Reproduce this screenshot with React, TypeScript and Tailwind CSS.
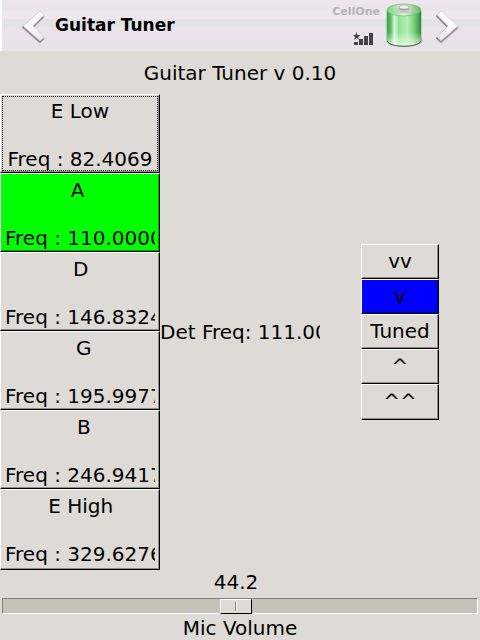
import { useState } from "react";

const strings = [
  { name: "E Low", freq: "82.4069" },
  { name: "A  ", freq: "110.0000" },
  { name: "D ", freq: "146.8324" },
  { name: "G", freq: "195.9977" },
  { name: "B", freq: "246.9417" },
  { name: "E High ", freq: "329.6276" },
];

const steps = ["vv", "v", "Tuned", "^", "^^"];

const maxVolume = 90;

const bevel =
  "border border-t-white border-l-white border-r-black border-b-black shadow-[inset_-1px_-1px_rgb(0_0_0/0.35)]";

function Chevron({ d, id }: { d: string; id: string }) {
  return (
    <svg width="24" height="38" viewBox="0 0 24 38" fill="none" aria-hidden="true">
      <defs>
        <linearGradient id={id} x1="0" y1="0" x2="0" y2="1">
          <stop offset="0" stopColor="#ffffff" />
          <stop offset="0.6" stopColor="#f8f6f8" />
          <stop offset="1" stopColor="#e6e3e7" />
        </linearGradient>
      </defs>
      <path d={d} fill="#c9c4ca" stroke="#d3ced4" strokeWidth="2" transform="translate(0 2)" />
      <path d={d} fill="#6d6a70" transform="translate(-1 1)" />
      <path d={d} fill="#8f8b92" transform="translate(0 2)" />
      <path d={d} fill={`url(#${id})`} stroke="#c4c0c6" strokeWidth="0.5" />
    </svg>
  );
}

function Battery() {
  return (
    <svg width="38" height="46" viewBox="0 0 38 46" aria-hidden="true">
      <defs>
        <linearGradient id="cell">
          <stop offset="0" stopColor="#3fae4c" />
          <stop offset="0.1" stopColor="#52b95a" />
          <stop offset="0.22" stopColor="#d9f8d8" />
          <stop offset="0.34" stopColor="#8fe391" />
          <stop offset="0.6" stopColor="#b4efb3" />
          <stop offset="0.8" stopColor="#77cf79" />
          <stop offset="1" stopColor="#2f8a3a" />
        </linearGradient>
        <linearGradient id="foot" x1="0" y1="0" x2="0" y2="1">
          <stop offset="0.6" stopColor="#ffffff" stopOpacity="0" />
          <stop offset="1" stopColor="#f0fbee" stopOpacity="0.8" />
        </linearGradient>
        <linearGradient id="lid">
          <stop offset="0" stopColor="#7fce82" />
          <stop offset="0.5" stopColor="#dff5dc" />
          <stop offset="1" stopColor="#5fb564" />
        </linearGradient>
      </defs>
      <ellipse cx="20" cy="38" rx="17" ry="5" fill="#c9c3ca" />
      <path d="M1 8V38C4 45 32 45 35 38V8Z" fill="url(#cell)" stroke="#3c8c45" strokeWidth="0.6" />
      <path d="M1 8V38C4 45 32 45 35 38V8Z" fill="url(#foot)" />
      <path d="M1 38C4 45 32 45 35 38" fill="none" stroke="#47604a" strokeWidth="1" />
      <ellipse cx="18" cy="7" rx="17" ry="6" fill="url(#lid)" stroke="#69b56d" strokeWidth="0.7" />
      <ellipse cx="18" cy="7" rx="8" ry="3.500" fill="#c3cbc3" />
      <path d="M13 4V6C14 8 22 8 23 6V4Z" fill="#a8a8aa" />
      <ellipse cx="18" cy="4" rx="5" ry="2" fill="#eeeeef" stroke="#9b9b9d" strokeWidth="0.5" />
    </svg>
  );
}

function Signal() {
  return (
    <svg width="21" height="14" viewBox="0 0 21 14" fill="#454347" aria-hidden="true">
      <path d="M3.500 0L4.500 3H7.500L5 5L6 8L3.500 6L1 8L2 5L0 3H2.500Z" />
      <path d="M1 10H5V13H1ZM6 7H10V13H6ZM11 4H15V13H11ZM16 1H20V13H16Z" />
    </svg>
  );
}

export default function App() {
  const [selected, setSelected] = useState(1);
  const [volume, setVolume] = useState(44.2);

  return (
    <main className="min-h-screen bg-[#dedbd6] font-['DejaVu_Sans',sans-serif] text-xl leading-6 text-black">
      <header className="flex h-[51px] items-center border-l-2 border-white bg-[linear-gradient(#eee6ee_0_4px,#ebe5eb_4px_11px,#ede8ed_11px_19px,#e3e2e4_19px_27px,#e9e4ea_27px_31px,#ebe3eb_31px_43px,#e6e3e7_43px)] px-5">
        <button type="button" aria-label="Back">
          <Chevron id="back" d="M18 4L22 8L11 19L22 30L18 34L1 19Z" />
        </button>
        <h1 className="ml-[9px] grow pb-0.5 text-[17px] font-bold">Guitar Tuner</h1>
        <div className="flex flex-col items-end gap-3 pr-1.5 pb-px">
          <span className="text-[11px] leading-4 font-bold text-[#b5b1b6]">CellOne</span>
          <div className="pr-1.5">
            <Signal />
          </div>
        </div>
        <Battery />
        <button type="button" aria-label="Next" className="ml-3">
          <Chevron id="next" d="M5 4L1 8L12 19L1 30L5 34L22 19Z" />
        </button>
      </header>

      <h2 className="pt-2.5 pb-[9px] text-center">Guitar Tuner v 0.10</h2>

      <div className="grid grid-cols-3 items-center">
        <div className="flex flex-col">
          {strings.map((s, i) => (
            <button
              key={s.freq}
              type="button"
              onClick={() => setSelected(i)}
              className={`${bevel} h-[79px] p-px last:h-[81px] ${
                i === selected ? "bg-[#00ff00]" : ""
              }`}
            >
              <span
                className={`block h-full border px-0.5 pt-0.5 ${
                  i === 0 ? "border-dotted border-black" : "border-transparent"
                }`}
              >
                <span className="flex justify-center-safe overflow-hidden">
                  <span className="block text-center whitespace-pre">
                    {`${s.name}\n\nFreq : ${s.freq}`}
                  </span>
                </span>
              </span>
            </button>
          ))}
        </div>

        <p className="overflow-hidden whitespace-nowrap">Det Freq: 111.0000</p>

        <div className="mx-auto flex w-[78px] flex-col">
          {steps.map((step) => (
            <button
              key={step}
              type="button"
              className={`${bevel} h-[35px] pb-0.5 last:h-9 ${
                step === "v" ? "border-t-[#5050ff] border-l-[#0000ff] bg-[#0000ff]" : ""
              }`}
            >
              {step}
            </button>
          ))}
        </div>
      </div>

      <div className="px-0.5">
        <output
          htmlFor="mic"
          className="flex h-7 w-8 justify-center"
          style={{ marginLeft: `calc((100% - 32px) * ${volume / maxVolume})` }}
        >
          {volume.toFixed(1)}
        </output>
        <input
          id="mic"
          type="range"
          min="0"
          max={maxVolume}
          step="0.1"
          value={volume}
          onChange={(e) => setVolume(Number(e.target.value))}
          className="block h-4 w-full appearance-none border border-t-[#848079] border-r-white border-b-white border-l-[#848079] bg-[#c6c2ba] [&::-webkit-slider-thumb]:h-[15px] [&::-webkit-slider-thumb]:w-8 [&::-webkit-slider-thumb]:appearance-none [&::-webkit-slider-thumb]:border [&::-webkit-slider-thumb]:border-t-white [&::-webkit-slider-thumb]:border-r-black [&::-webkit-slider-thumb]:border-b-black [&::-webkit-slider-thumb]:border-l-white [&::-webkit-slider-thumb]:bg-[#dedbd6] [&::-webkit-slider-thumb]:bg-[linear-gradient(90deg,#848079_50%,#ffffff_50%)] [&::-webkit-slider-thumb]:bg-[size:2px_9px] [&::-webkit-slider-thumb]:bg-center [&::-webkit-slider-thumb]:bg-no-repeat"
        />
        <label htmlFor="mic" className="block pt-0.5 text-center">
          Mic Volume
        </label>
      </div>
    </main>
  );
}
